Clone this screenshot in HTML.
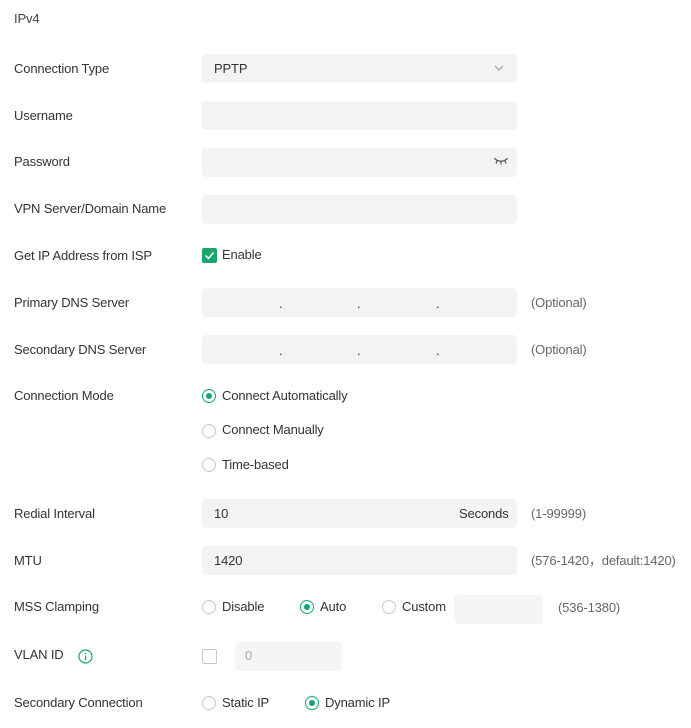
<!DOCTYPE html>
<html><head><meta charset="utf-8"><style>
*{margin:0;padding:0;box-sizing:border-box}
body{width:691px;height:728px;background:#fff;font-family:"Liberation Sans",Arial,sans-serif;font-size:13px;letter-spacing:-0.15px;color:#333;position:relative;overflow:hidden}
.a{position:absolute;line-height:16px;white-space:nowrap}
.in{position:absolute;background:#f3f3f3;border-radius:4px;height:29px}
.r{position:absolute;width:14px;height:14px;border:1px solid #c8c8c8;border-radius:50%;background:#fff}
.r.on{border-color:#1aa56e}
.r.on::after{content:"";position:absolute;left:3px;top:3px;width:6px;height:6px;border-radius:50%;background:#1aa56e}
.g{color:#666}
</style></head><body>
<div class="a" style="left:14px;top:11px;color:#444">IPv4</div>

<div class="a" style="left:14px;top:61px">Connection Type</div>
<div class="in" style="left:202px;top:54px;width:315px"></div>
<div class="a" style="left:214px;top:61px">PPTP</div>
<svg class="a" style="left:494px;top:64px" width="10" height="8"><path d="M1 2 L5 6 L9 2" stroke="#999" fill="none" stroke-width="1"/></svg>

<div class="a" style="left:14px;top:108px">Username</div>
<div class="in" style="left:202px;top:101px;width:315px"></div>

<div class="a" style="left:14px;top:154px">Password</div>
<div class="in" style="left:202px;top:148px;width:315px"></div>
<svg class="a" style="left:494px;top:157px" width="14" height="9"><path d="M1 2 Q7 6.5 13 2 M3 3.8 L2 6.5 M7 4.8 L7 7.5 M11 3.8 L12 6.5 M1 2 L0.5 1 M13 2 L13.5 1" stroke="#555" fill="none" stroke-width="1.2"/></svg>

<div class="a" style="left:14px;top:201px">VPN Server/Domain Name</div>
<div class="in" style="left:202px;top:195px;width:315px"></div>

<div class="a" style="left:14px;top:248px">Get IP Address from ISP</div>
<div class="a" style="left:202px;top:248px;width:15px;height:15px;background:#1aa56e;border-radius:2px"></div>
<svg class="a" style="left:202px;top:248px" width="15" height="15"><path d="M3.5 7.5 L6.5 10.5 L11.5 4.5" stroke="#fff" fill="none" stroke-width="1.5"/></svg>
<div class="a" style="left:222px;top:247px">Enable</div>

<div class="a" style="left:14px;top:295px">Primary DNS Server</div>
<div class="in" style="left:202px;top:288px;width:315px"></div>
<div class="a" style="left:279px;top:296px">.</div><div class="a" style="left:357px;top:296px">.</div><div class="a" style="left:436px;top:296px">.</div>
<div class="a g" style="left:531px;top:295px">(Optional)</div>

<div class="a" style="left:14px;top:342px">Secondary DNS Server</div>
<div class="in" style="left:202px;top:335px;width:315px"></div>
<div class="a" style="left:279px;top:343px">.</div><div class="a" style="left:357px;top:343px">.</div><div class="a" style="left:436px;top:343px">.</div>
<div class="a g" style="left:531px;top:342px">(Optional)</div>

<div class="a" style="left:14px;top:388px">Connection Mode</div>
<div class="r on" style="left:202px;top:389px"></div><div class="a" style="left:222px;top:388px">Connect Automatically</div>
<div class="r" style="left:202px;top:424px"></div><div class="a" style="left:222px;top:422px">Connect Manually</div>
<div class="r" style="left:202px;top:458px"></div><div class="a" style="left:222px;top:457px">Time-based</div>

<div class="a" style="left:14px;top:506px">Redial Interval</div>
<div class="in" style="left:202px;top:499px;width:315px"></div>
<div class="a" style="left:214px;top:506px">10</div>
<div class="a" style="left:459px;top:506px">Seconds</div>
<div class="a g" style="left:531px;top:506px">(1-99999)</div>

<div class="a" style="left:14px;top:553px">MTU</div>
<div class="in" style="left:202px;top:546px;width:315px"></div>
<div class="a" style="left:214px;top:553px">1420</div>
<div class="a g" style="left:531px;top:553px">(576-1420，default:1420)</div>

<div class="a" style="left:14px;top:599px">MSS Clamping</div>
<div class="r" style="left:202px;top:600px"></div><div class="a" style="left:222px;top:599px">Disable</div>
<div class="r on" style="left:300px;top:600px"></div><div class="a" style="left:320px;top:599px">Auto</div>
<div class="r" style="left:382px;top:600px"></div><div class="a" style="left:402px;top:599px">Custom</div>
<div class="in" style="left:454px;top:595px;width:89px;background:#f5f5f5"></div>
<div class="a g" style="left:558px;top:600px">(536-1380)</div>

<div class="a" style="left:14px;top:647px">VLAN ID</div>
<svg class="a" style="left:78px;top:649px" width="15" height="15"><circle cx="7.5" cy="7.5" r="6.5" stroke="#1aa56e" fill="none" stroke-width="1.2"/><path d="M7.5 6.5 V11 M7.5 4 V5" stroke="#1aa56e" stroke-width="1.3"/></svg>
<div class="a" style="left:202px;top:649px;width:15px;height:15px;border:1px solid #c8c8c8;border-radius:2px"></div>
<div class="in" style="left:235px;top:642px;width:107px;background:#f5f5f5"></div>
<div class="a" style="left:245px;top:648px;color:#aaa">0</div>

<div class="a" style="left:14px;top:695px">Secondary Connection</div>
<div class="r" style="left:202px;top:696px"></div><div class="a" style="left:222px;top:695px">Static IP</div>
<div class="r on" style="left:305px;top:696px"></div><div class="a" style="left:325px;top:695px">Dynamic IP</div>
</body></html>
